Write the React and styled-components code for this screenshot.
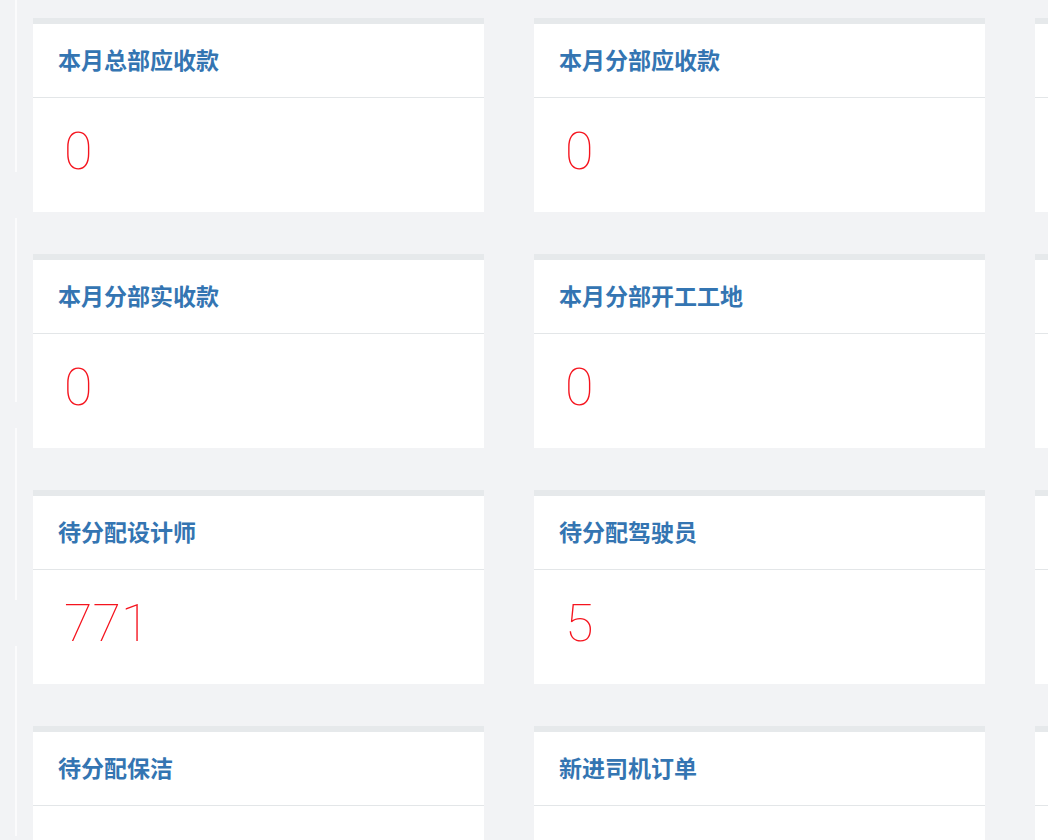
import React from 'react'
import styled, { createGlobalStyle } from 'styled-components'

const GlobalStyle = createGlobalStyle`
  html, body {
    margin: 0;
    padding: 0;
    background: #f2f3f5;
    overflow: hidden;
  }
  body {
    font-family: "Noto Sans CJK SC", "Noto Sans", sans-serif;
  }
`

const cards = [
  { title: '本月总部应收款', value: '0' },
  { title: '本月分部应收款', value: '0' },
  { title: '', value: '' },
  { title: '本月分部实收款', value: '0' },
  { title: '本月分部开工工地', value: '0' },
  { title: '', value: '' },
  { title: '待分配设计师', value: '771' },
  { title: '待分配驾驶员', value: '5' },
  { title: '', value: '' },
  { title: '待分配保洁', value: '' },
  { title: '新进司机订单', value: '' },
  { title: '', value: '' }
]

const rail = [
  { top: 0, height: 172 },
  { top: 46, height: 184 },
  { top: 26, height: 172 },
  { top: 46, height: 190 }
]

const App = () => {
  return (
    <Page>
      <GlobalStyle />
      <Rail>
        {rail.map((s, i) => (
          <RailLine key={i} style={{ marginTop: s.top, height: s.height }} />
        ))}
      </Rail>
      <Grid>
        {cards.map((c, i) => (
          <Card key={i}>
            <CardHeader>{c.title}</CardHeader>
            <CardBody>
              <Value>{c.value}</Value>
            </CardBody>
          </Card>
        ))}
      </Grid>
    </Page>
  )
}

const Page = styled.div`
  display: flex;
  width: 1048px;
  height: 840px;
  overflow: hidden;
`

const Rail = styled.div`
  flex-shrink: 0;
  width: 33px;
  padding-left: 15px;
  box-sizing: border-box;
  display: flex;
  flex-direction: column;
`

const RailLine = styled.div`
  width: 2px;
  flex-shrink: 0;
  background: #fbfbfc;
`

const Grid = styled.div`
  display: grid;
  grid-template-columns: repeat(3, 451px);
  column-gap: 50px;
  row-gap: 42px;
  padding-top: 18px;
  flex-shrink: 0;
`

const Card = styled.div`
  background: #ffffff;
  border-top: 6px solid #e6e9eb;
  height: 194px;
  box-sizing: border-box;
  display: flex;
  flex-direction: column;
`

const CardHeader = styled.div`
  height: 74px;
  border-bottom: 1px solid #e3e6e8;
  box-sizing: border-box;
  display: flex;
  align-items: center;
  padding-left: 25px;
  padding-bottom: 4px;
  font-size: 23px;
  font-weight: 700;
  color: #3475b2;
`

const CardBody = styled.div`
  flex: 1;
  display: flex;
  align-items: center;
  padding-left: 31px;
`

const Value = styled.div`
  font-family: Roboto, "Liberation Sans", sans-serif;
  font-weight: 100;
  font-size: 52px;
  line-height: 1;
  color: #f5141e;
  margin-top: -6px;
`

export default App
